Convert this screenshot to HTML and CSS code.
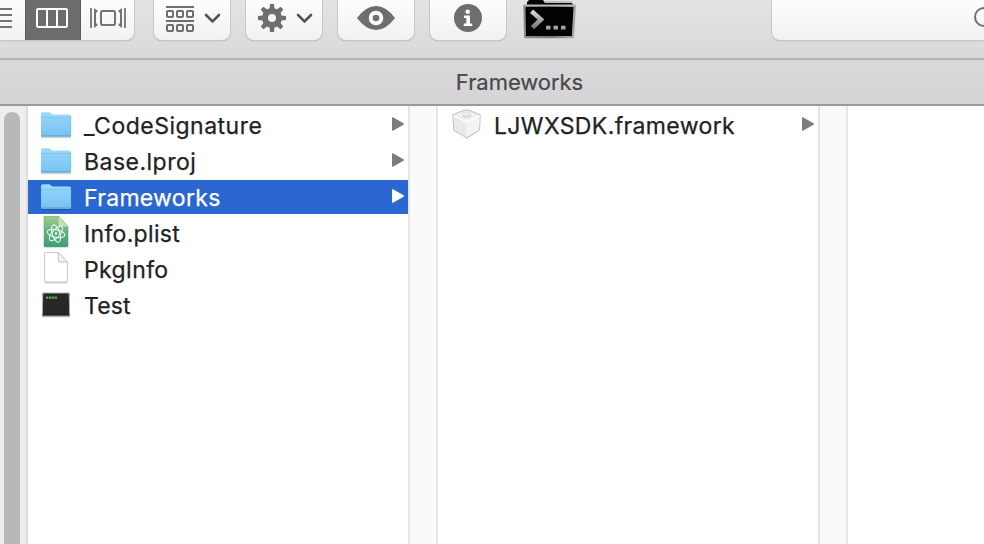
FILE: index.html
```html
<!DOCTYPE html>
<html lang="en">
<head>
<meta charset="utf-8">
<title>Frameworks</title>
<link rel="stylesheet" href="styles.css">
</head>
<body>
<svg class="defs" width="0" height="0" aria-hidden="true">
  <defs>
    <linearGradient id="folderFill" x1="0" y1="0" x2="0" y2="1"><stop offset="0" stop-color="#8fd2f9"/><stop offset="1" stop-color="#78c3f2"/></linearGradient>
    <linearGradient id="atomFill" x1="0" y1="0" x2="0" y2="1"><stop offset="0" stop-color="#a2cd8b"/><stop offset=".5" stop-color="#64b183"/><stop offset="1" stop-color="#409b75"/></linearGradient>
    <linearGradient id="promptFill" x1="0" y1="0" x2="0" y2="1"><stop offset="0" stop-color="#d8d8d8"/><stop offset="1" stop-color="#777"/></linearGradient>
    <linearGradient id="rimFill" x1="0" y1="0" x2="1" y2="0"><stop offset="0" stop-color="#8c8c8c"/><stop offset=".5" stop-color="#777"/><stop offset="1" stop-color="#aaa"/></linearGradient>
    <symbol id="folder" viewBox="0 0 32 28">
      <path d="M1 25.500H31" stroke="#000" stroke-opacity=".16" stroke-width="1.500"/>
      <path d="M1 2q0-1.700 1.700-1.700H9q1 0 1.600.7l1.500 1.600H29q2 0 2 1.700V23.500q0 1-1 1H2q-1 0-1-1z" fill="#9bd9fb"/>
      <path d="M1 5.500H31V23.500q0 1-1 1H2q-1 0-1-1z" fill="url(#folderFill)"/>
      <path d="M1 5.300H31" stroke="#72b9e2" stroke-width=".7"/>
      <path d="M1.300 24H30.700" stroke="#579fca" stroke-width="1"/>
      <path d="M30.700 4V24" stroke="#6fb8e3" stroke-width=".6"/>
    </symbol>
    <symbol id="arrow" viewBox="0 0 12 14"><path d="M0 1q0-1 1-.7L11.500 6.300q.8.700 0 1.400L1 13.700q-1 .3-1-.7z" fill="currentColor"/></symbol>
  </defs>
</svg>
<div class="window">
  <header class="toolbar">
    <div class="views">
      <svg viewBox="0 0 134 40" width="134" height="40">
        <path d="M0 9H12M0 15H12M0 21H12M0 27H12" stroke="#737373" stroke-width="2"/>
        <path d="M25 0H81V41H25z" fill="#6c6c6c"/><path d="M25.500 0V41M80.500 0V41" stroke="#5c5c5c"/>
        <rect x="37" y="9" width="30" height="18" rx="1" fill="none" stroke="#fff" stroke-width="2"/>
        <path d="M47 9V27M57 9V27" stroke="#fff" stroke-width="2"/>
        <rect x="101" y="11" width="14" height="14" rx="1.500" fill="none" stroke="#737373" stroke-width="2"/>
        <path d="M91 8V28M125 8V28" stroke="#737373" stroke-width="1.800"/>
        <path d="M94 8l4 3-2 2v10l2 2-4 3zM122 8l-4 3 2 2v10l-2 2 4 3z" fill="#737373"/>
      </svg>
    </div>
    <div class="button">
      <svg viewBox="153 0 78 41" width="78" height="41">
        <g fill="none" stroke="#6e6e6e" stroke-width="2"><path d="M166 7H194M166 21H194"/><rect x="167" y="11" width="6" height="6" rx="1"/><rect x="177" y="11" width="6" height="6" rx="1"/><rect x="187" y="11" width="6" height="6" rx="1"/><rect x="167" y="25" width="6" height="6" rx="1"/><rect x="177" y="25" width="6" height="6" rx="1"/><rect x="187" y="25" width="6" height="6" rx="1"/></g>
        <path d="M206 15l6.500 6.500L219 15" fill="none" stroke="#555" stroke-width="2.600" stroke-linecap="round"/>
      </svg>
    </div>
    <div class="button">
      <svg viewBox="245 0 78 41" width="78" height="41">
        <g fill="#6e6e6e"><path d="M269.500 9L270 4h4l.5 5v18l-.5 5h-4l-.5-5z"/><path transform="rotate(45 272 18)" d="M269.500 9L270 4h4l.5 5v18l-.5 5h-4l-.5-5z"/><path transform="rotate(90 272 18)" d="M269.500 9L270 4h4l.5 5v18l-.5 5h-4l-.5-5z"/><path transform="rotate(135 272 18)" d="M269.500 9L270 4h4l.5 5v18l-.5 5h-4l-.5-5z"/><circle cx="272" cy="18" r="10"/></g>
        <circle cx="272" cy="18" r="4" fill="#f7f7f7"/>
        <path d="M298 15l6.500 6.500L311 15" fill="none" stroke="#555" stroke-width="2.600" stroke-linecap="round"/>
      </svg>
    </div>
    <div class="button">
      <svg viewBox="337 0 78 41" width="78" height="41">
        <path d="M357 18Q366 6 376 6T395 18Q386 30 376 30T357 18z" fill="#6e6e6e"/>
        <circle cx="376" cy="18" r="5.300" fill="#6e6e6e" stroke="#fafafa" stroke-width="4"/>
      </svg>
    </div>
    <div class="button">
      <svg viewBox="429 0 78 41" width="78" height="41">
        <circle cx="468" cy="18" r="14" fill="#6e6e6e"/><circle cx="467.700" cy="11.800" r="2.300" fill="#fafafa"/>
        <path d="M464 15.500H470V23.500H472.300V26H463.700V23.500H466.300V18H464z" fill="#fafafa"/>
      </svg>
    </div>
    <svg class="terminal" viewBox="522 0 56 41" width="56" height="41">
      <path d="M527 5V2l2-2H543l2 3H571q2 0 2 2z" fill="#050505"/>
      <path d="M545 2H572" stroke="#999" stroke-width="1"/>
      <path d="M525 4.500H575q1 0 1 2L574 37q0 1.200-2 1.200H526q-2 0-2-1.500L523.300 6q0-1.500 1.700-1.500z" fill="url(#rimFill)"/>
      <path d="M525.500 7H573.500L571.800 36H526z" fill="#020202"/>
      <path d="M525 5.300H574" stroke="#c5c5c5" stroke-width="1"/>
      <path d="M531.500 11.200L541 19.500L532.500 27.700" fill="none" stroke="url(#promptFill)" stroke-width="4.600"/>
      <path d="M546 27.700h4.500M553.500 27.700h4.500M561 27.700h4.500" stroke="#a5a5a5" stroke-width="3.800"/>
    </svg>
    <div class="search">
      <svg viewBox="971 0 13 41" width="13" height="41"><circle cx="984" cy="17" r="9" fill="none" stroke="#707070" stroke-width="2"/></svg>
    </div>
  </header>
  <div class="titlebar"><span class="title">Frameworks</span></div>
  <main class="browser">
    <div class="scroller"><div class="thumb"></div></div>
    <section class="column">
      <div class="row"><svg class="icon folder" width="32" height="28"><use href="#folder"/></svg><span class="name code">_CodeSignature</span><svg class="arrow" width="12" height="14"><use href="#arrow"/></svg></div>
      <div class="row"><svg class="icon folder" width="32" height="28"><use href="#folder"/></svg><span class="name base">Base.lproj</span><svg class="arrow" width="12" height="14"><use href="#arrow"/></svg></div>
      <div class="row selected"><svg class="icon folder" width="32" height="28"><use href="#folder"/></svg><span class="name">Frameworks</span><svg class="arrow" width="12" height="14"><use href="#arrow"/></svg></div>
      <div class="row"><svg class="icon" viewBox="40 216 32 34" width="32" height="34">
        <path d="M44 217q0-1 1-1H58.500L68 226.500V246q0 1-1 1H45q-1 0-1-1z" fill="url(#atomFill)" stroke="#5ba77a" stroke-width=".6"/><path d="M58.500 216.500V225q0 1.500 1.500 1.500H68z" fill="#c1dfb2"/>
        <g fill="none" stroke="#effff5" stroke-width="1"><ellipse cx="56" cy="233.500" rx="9" ry="3.800" transform="rotate(12 56 233.500)"/><ellipse cx="56" cy="233.500" rx="9" ry="3.800" transform="rotate(72 56 233.500)"/><ellipse cx="56" cy="233.500" rx="9" ry="3.800" transform="rotate(132 56 233.500)"/></g><circle cx="56" cy="233.500" r="1.200" fill="#fff"/>
      </svg><span class="name info">Info.plist</span></div>
      <div class="row"><svg class="icon" viewBox="40 252 32 34" width="32" height="34">
        <path d="M45 282.700H67" stroke="#bbb" stroke-width="1.200"/><path d="M44.500 253.500q0-1 1-1H58L67.500 262.500V281q0 1-1 1H45.500q-1 0-1-1z" fill="#fff" stroke="#c9c9c9"/><path d="M58.300 252.500V260.500q0 1.500 1.500 1.500H67.500z" fill="#f4f4f4" stroke="#bbb" stroke-width=".9"/>
      </svg><span class="name">PkgInfo</span></div>
      <div class="row"><svg class="icon" viewBox="40 291 32 28" width="32" height="28">
        <path d="M42 316.500H70" stroke="#000" stroke-opacity=".3" stroke-width="1.500"/><path d="M42.800 293H69.200L69.700 315.500H42.300z" fill="#272727" stroke="#a7b0b1" stroke-width="1"/><path d="M42.500 315H69.500" stroke="#111"/>
        <path d="M46 297.700H57" stroke="#4fb652" stroke-width="2.200" stroke-dasharray="2.200 .7"/>
      </svg><span class="name test">Test</span></div>
    </section>
    <div class="gutter"></div>
    <section class="column">
      <div class="row"><svg class="icon" viewBox="450 109 32 32" width="32" height="32">
        <path d="M452.800 115L462 111q4.500-1.700 9 0L480.200 115L479.500 130L467 138L453.800 130z" fill="#f0f0f0" stroke="#c4c4c4" stroke-width="1.200" stroke-linejoin="round"/>
        <path d="M453.500 116L466.500 122V137.300L454.300 129.700z" fill="#e9e9e9"/><path d="M466.500 122L479.700 116L479 129.700L466.500 137.300z" fill="#f3f3f3"/>
        <path d="M453.700 115.700L466.500 122L479.500 115.700" fill="none" stroke="#fff" stroke-width="1.200"/>
        <path d="M462 114v2.500q0 1.500 4.500 1.500t4.500-1.500v-2.500z" fill="#dcdcdc"/><ellipse cx="466.500" cy="114" rx="4.500" ry="1.600" fill="#efefef" stroke="#dcdcdc" stroke-width=".8"/>
      </svg><span class="name sdk">LJWXSDK.framework</span><svg class="arrow" width="12" height="14"><use href="#arrow"/></svg></div>
    </section>
    <div class="gutter"></div>
    <section class="column last"></section>
  </main>
</div>
</body>
</html>
```
FILE: styles.css
```css
* { box-sizing: border-box; }
body { margin: 0; overflow: hidden; background: #fff; font-family: Inter, "Liberation Sans", sans-serif; }
.defs { position: absolute; }
svg { display: block; flex: none; }
.window { width: 984px; height: 544px; display: flex; flex-direction: column; overflow: hidden; }
.toolbar { height: 60px; flex: none; display: flex; align-items: flex-start; background: linear-gradient(#e5e2e6, #dad8db); border-bottom: 2px solid #b4b2b5; }
.views, .button, .search { height: 40px; flex: none; overflow: hidden; background: linear-gradient(#fdfdfd, #f1f1f1); box-shadow: 0 0 0 1px #c8c6c9, 0 1px 1px #9d9b9e; }
.views { width: 134px; margin-right: 20px; border-radius: 0 0 8px 0; }
.button { width: 76px; margin-right: 16px; border-radius: 0 0 8px 8px; }
.button svg { margin-left: -1px; }
.terminal { margin-right: 194px; }
.search { width: 212px; display: flex; justify-content: flex-end; border-radius: 0 0 0 8px; }
.titlebar { height: 46px; flex: none; display: flex; justify-content: center; align-items: center; background: linear-gradient(#dad9da, #d5d3d6); border-bottom: 2px solid #9a989b; color: #484848; }
.title { padding-left: 55px; font-size: 22px; line-height: 44px; letter-spacing: -.05px; white-space: nowrap; -webkit-text-stroke: .2px currentColor; }
.browser { flex: 1; min-height: 0; display: flex; }
.scroller { width: 28px; flex: none; padding: 6px 6px 0 4px; background: #eee; border-right: 2px solid #dcdcdc; overflow: hidden; }
.thumb { width: 16px; height: 460px; border-radius: 8px; background: #b8b8b8; }
.column { width: 380px; flex: none; padding-top: 2px; display: flex; flex-direction: column; gap: 2px; }
.last { width: auto; flex: 1; }
.row { height: 34px; flex: none; display: flex; align-items: center; padding: 0 0 0 12px; color: #222; }
.icon { margin-right: 12px; }
.folder { margin-top: 2px; }
.name { padding-top: 2px; font-size: 23px; line-height: 34px; letter-spacing: .3px; white-space: nowrap; -webkit-text-stroke: .25px currentColor; }
.code { letter-spacing: .5px; }
.base { letter-spacing: .48px; }
.info { letter-spacing: .32px; }
.test { letter-spacing: .15px; }
.sdk { letter-spacing: .37px; }
.arrow { margin: 0 4px 2px auto; color: #7d7d7d; }
.selected { background: #2a67d1; color: #fff; }
.selected .arrow { color: #fff; }
.gutter { width: 30px; flex: none; background: #fafafa; border-left: 2px solid #e5e5e5; border-right: 2px solid #e8e8e8; }
```
